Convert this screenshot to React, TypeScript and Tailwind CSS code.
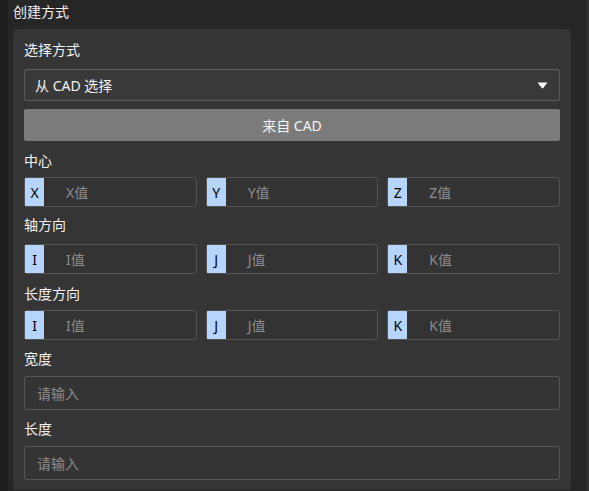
const font = { fontFamily: '"Noto Sans", "Noto Sans CJK SC", sans-serif' };

type Axis = { key: string; placeholder: string };

function AxisInput({ axis }: { axis: Axis }) {
  return (
    <div className="flex h-[30px] items-stretch rounded-[3px] border border-[#545454] bg-[#333333]">
      <span className="flex w-[19px] items-center justify-center bg-[#b6d5fd] text-[14px] text-black">
        {axis.key}
      </span>
      <span className="flex items-center pl-[22px] text-[14px] text-[#8c8c8c]">
        {axis.placeholder}
      </span>
    </div>
  );
}

function AxisRow({ axes }: { axes: Axis[] }) {
  return (
    <div className="grid grid-cols-3 gap-[9px]">
      {axes.map((a) => (
        <AxisInput key={a.key} axis={a} />
      ))}
    </div>
  );
}

function Label({ text, pt, h }: { text: string; pt: string; h: string }) {
  return (
    <div className={`${h} ${pt} text-[14px] leading-[22px] text-[#f2f2f2]`}>{text}</div>
  );
}

function TextInput() {
  return (
    <div className="flex h-[34px] items-center rounded-[3px] border border-[#575757] bg-[#343434] pl-[12px] text-[14px] text-[#8c8c8c]">
      请输入
    </div>
  );
}

const ijk: Axis[] = [
  { key: "I", placeholder: "I值" },
  { key: "J", placeholder: "J值" },
  { key: "K", placeholder: "K值" },
];

export default function App() {
  return (
    <div className="flex h-[491px] w-[589px] overflow-hidden bg-[#262626]" style={font}>
      <div className="w-[8px] shrink-0 bg-[#1e1e1e]" />
      <div className="flex-1 pl-[5px]">
        <div className="h-[29px] text-[14px] leading-[23px] text-[#f2f2f2]">创建方式</div>
        <div className="flex h-[461px] w-[558px] flex-col rounded-[4px] bg-[#353535] px-[11px]">
          <Label text="选择方式" pt="pt-[10px]" h="h-[40px]" />
          <div className="flex h-[32px] items-center justify-between rounded-[2px] border border-[#5c5c5c] bg-[#393939] pl-[10px] pr-[11px] text-[14px] text-[#f2f2f2]">
            <span>从 CAD 选择</span>
            <svg width="11" height="7" viewBox="0 0 11 7">
              <path d="M0.5 0.5 H10.5 L6.2 6 Q5.5 6.8 4.8 6 Z" fill="#ffffff" />
            </svg>
          </div>
          <button
            type="button"
            className="mt-[8px] h-[32px] rounded-[2px] bg-[#7b7b7b] text-[14px] text-[#f5f5f5]"
          >
            来自 CAD
          </button>
          <Label text="中心" pt="pt-[9px]" h="h-[36px]" />
          <AxisRow
            axes={[
              { key: "X", placeholder: "X值" },
              { key: "Y", placeholder: "Y值" },
              { key: "Z", placeholder: "Z值" },
            ]}
          />
          <Label text="轴方向" pt="pt-[7px]" h="h-[37px]" />
          <AxisRow axes={ijk} />
          <Label text="长度方向" pt="pt-[9px]" h="h-[36px]" />
          <AxisRow axes={ijk} />
          <Label text="宽度" pt="pt-[8px]" h="h-[36px]" />
          <TextInput />
          <Label text="长度" pt="pt-[8px]" h="h-[36px]" />
          <TextInput />
        </div>
      </div>
      <div className="w-[3px] shrink-0 bg-[#303030]" />
    </div>
  );
}
